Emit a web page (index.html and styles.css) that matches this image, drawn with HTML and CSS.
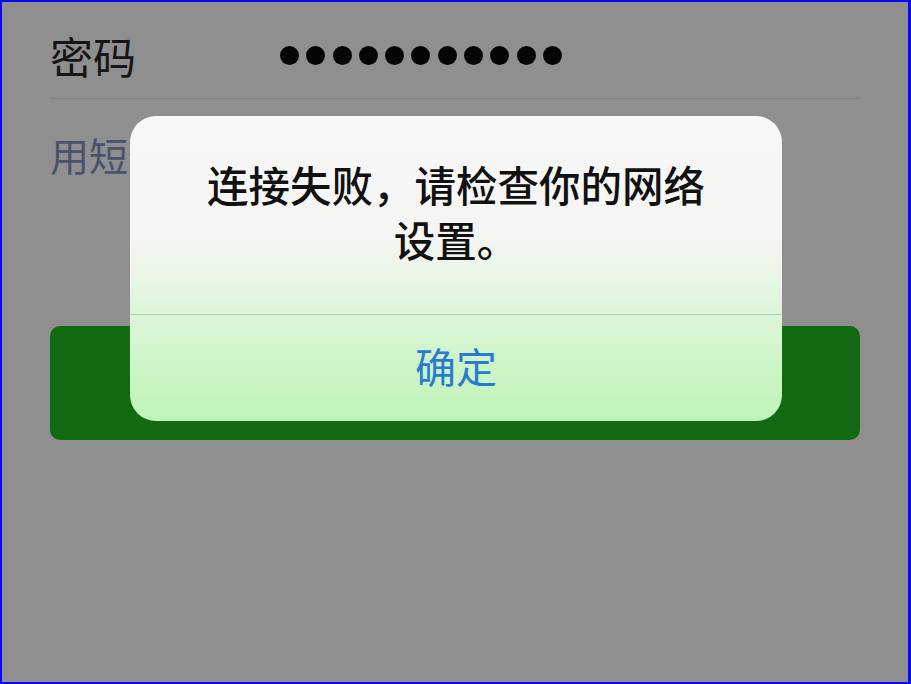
FILE: index.html
```html
<!DOCTYPE html>
<html lang="zh-CN">
<head>
    <meta charset="UTF-8">
    <title>登录</title>
    <link rel="stylesheet" href="styles.css">
</head>
<body>
    <div class="screen">
        <div class="login-form">
            <div class="field-row">
                <span class="field-label">密码</span>
                <div class="password-dots">
                    <span class="dot"></span><span class="dot"></span><span class="dot"></span>
                    <span class="dot"></span><span class="dot"></span><span class="dot"></span>
                    <span class="dot"></span><span class="dot"></span><span class="dot"></span>
                    <span class="dot"></span><span class="dot"></span>
                </div>
            </div>
            <div class="field-divider"></div>
            <a class="sms-link">用短信验证码登录</a>
            <button class="login-btn" type="button"></button>
        </div>

        <!-- alerta de erro de rede -->
        <div class="alert">
            <div class="alert-message">连接失败，请检查你的网络设置。</div>
            <div class="alert-divider"></div>
            <button class="alert-btn" type="button">确定</button>
        </div>
    </div>
</body>
</html>
```

FILE: styles.css
```css
html, body {
    margin: 0;
    padding: 0;
}

body {
    font-family: "Noto Sans CJK SC", "Noto Sans", sans-serif;
}

.screen {
    position: relative;
    box-sizing: border-box;
    width: 911px;
    height: 684px;
    background-color: #8f8f8f;
    border: 2px solid #0a0af2;
    border-right-width: 3px;
    overflow: hidden;
}

.login-form {
    display: flex;
    flex-direction: column;
    padding: 0 48px;
}

.field-row {
    display: flex;
    align-items: center;
    height: 86px;
    padding-top: 10px;
}

.field-label {
    width: 230px;
    font-size: 43px;
    line-height: 1;
    color: #151515;
}

.password-dots {
    display: flex;
    gap: 7.3px;
}

.dot {
    width: 19px;
    height: 19px;
    border-radius: 50%;
    background-color: #050505;
}

.field-divider {
    height: 1px;
    background-color: #828282;
}

.sms-link {
    margin-top: 35px;
    font-size: 39px;
    line-height: 40px;
    white-space: nowrap;
    color: #48526e;
}

.login-btn {
    margin-top: 152px;
    height: 114px;
    border: none;
    border-radius: 10px;
    background-color: #126a13;
}

.alert {
    position: absolute;
    left: 128px;
    top: 114px;
    width: 652px;
    height: 305px;
    display: flex;
    flex-direction: column;
    border-radius: 26px;
    overflow: hidden;
    background: linear-gradient(to bottom, #f7f7f7 0%, #f5f6f4 38%, #ebf6e8 52%, #ddf5d9 65%, #cef5c9 80%, #bef4b8 100%);
}

.alert-message {
    height: 198px;
    box-sizing: border-box;
    padding: 41px 60px 0;
    font-size: 41.5px;
    font-weight: 500;
    line-height: 55px;
    text-align: center;
    color: #111111;
}

.alert-divider {
    height: 1px;
    background-color: #b4c9b2;
}

.alert-btn {
    flex: 1;
    padding: 0 0 6px;
    border: none;
    background: transparent;
    color: #2a7ad4;
    font-family: inherit;
    font-size: 41px;
    cursor: pointer;
}
```
